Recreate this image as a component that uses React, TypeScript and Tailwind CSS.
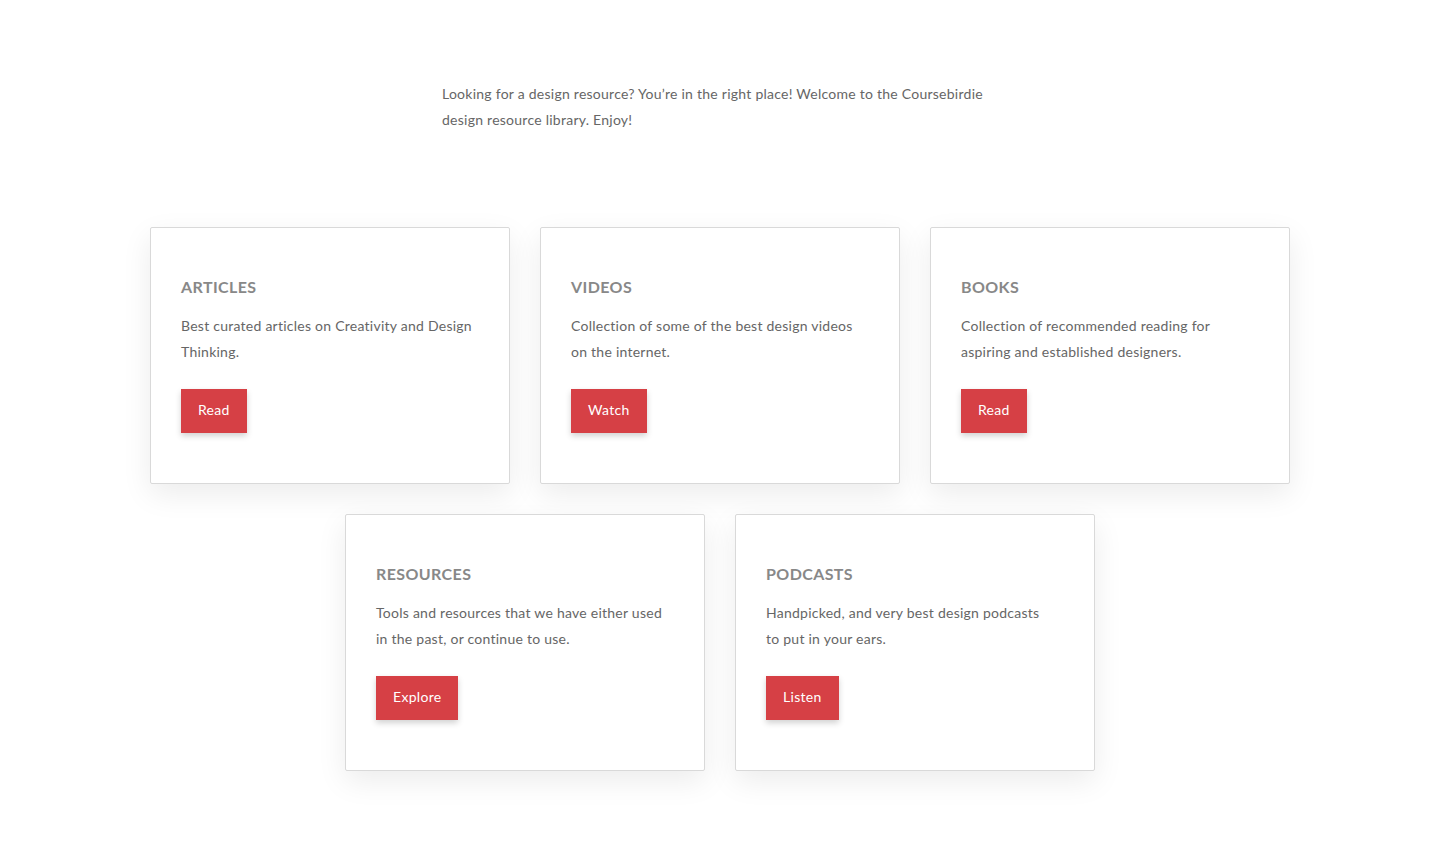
import React from 'react';

type Resource = {
  title: string;
  text: string;
  action: string;
};

const topRow: Resource[] = [
  { title: 'Articles', text: 'Best curated articles on Creativity and Design Thinking.', action: 'Read' },
  { title: 'Videos', text: 'Collection of some of the best design videos on the internet.', action: 'Watch' },
  { title: 'Books', text: 'Collection of recommended reading for aspiring and established designers.', action: 'Read' },
];

const bottomRow: Resource[] = [
  { title: 'Resources', text: 'Tools and resources that we have either used in the past, or continue to use.', action: 'Explore' },
  { title: 'Podcasts', text: 'Handpicked, and very best design podcasts to\u00a0put in your ears.', action: 'Listen' },
];

function ResourceCard({ title, text, action }: Resource) {
  return (
    <div className="w-[360px] h-[257px] bg-white border border-[#d9d9d9] rounded-[2px] shadow-[0_10px_30px_rgba(0,0,0,0.08)] px-[30px] pt-[47px]">
      <h3 className="text-[16px] leading-[24px] font-bold uppercase text-[#888] tracking-[0.4px]">{title}</h3>
      <p className="mt-[14px] text-[14px] leading-[26px] text-[#666] tracking-[0.25px] pr-[1px]">{text}</p>
      <button className="mt-[24px] h-[44px] px-[17px] pb-[3px] bg-[#d64045] text-white text-[14px] tracking-[0.3px] shadow-[0_3px_6px_rgba(0,0,0,0.18)]">
        {action}
      </button>
    </div>
  );
}

export default function App() {
  return (
    <div className="min-h-screen bg-white font-['Lato','Noto_Sans',sans-serif]">
      {/* Intro */}
      <div className="w-[556px] mx-auto pt-[81px]">
        <p className="text-[14px] leading-[26px] text-[#666] tracking-[0.25px]">
          Looking for a design resource? You’re in the right place! Welcome to the Coursebirdie design resource library. Enjoy!
        </p>
      </div>

      {/* Cards */}
      <div className="mt-[94px] flex flex-col items-center gap-[30px] pb-[84px]">
        <div className="flex gap-[30px]">
          {topRow.map((r) => (
            <ResourceCard key={r.title} {...r} />
          ))}
        </div>
        <div className="flex gap-[30px]">
          {bottomRow.map((r) => (
            <ResourceCard key={r.title} {...r} />
          ))}
        </div>
      </div>
    </div>
  );
}
